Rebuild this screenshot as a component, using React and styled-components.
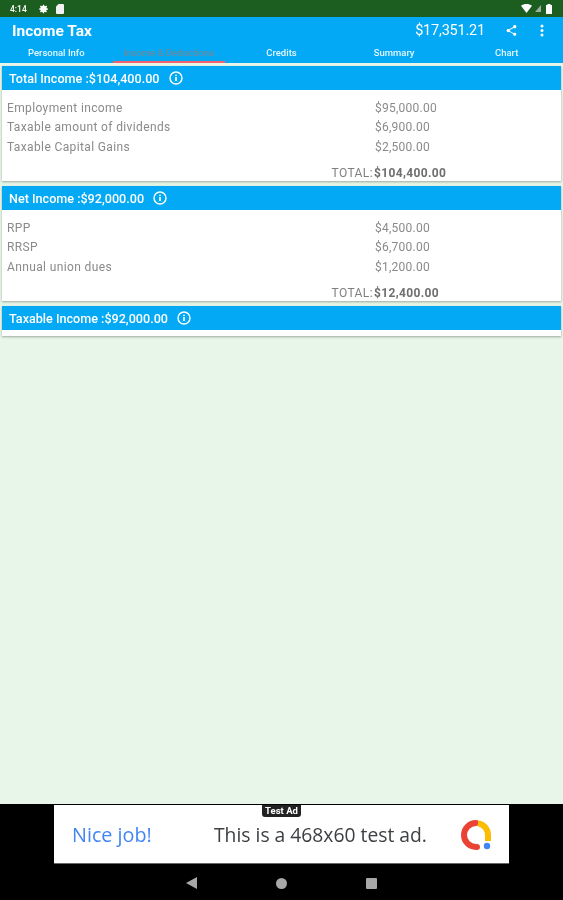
import styled, { createGlobalStyle } from 'styled-components';

const GlobalStyle = createGlobalStyle`
  html, body { margin: 0; padding: 0; height: 100%; }
  body { font-family: Roboto, "Liberation Sans", sans-serif; background: #000; }
  #root { height: 100%; }
`;

const Screen = styled.div`
  width: 563px;
  height: 900px;
  display: flex;
  flex-direction: column;
  overflow: hidden;
  background: #e8f5e9;
  filter: blur(0.55px);
`;

const StatusBar = styled.div`
  height: 17px;
  flex: none;
  background: #1b5e20;
  display: flex;
  align-items: center;
  padding: 0 11px 0 10px;
  color: #fff;
`;
const StatusTime = styled.span`
  font-size: 8.5px;
  font-weight: 500;
  width: 23px;
  margin-right: 6px;
`;
const StatusRight = styled.div`
  margin-left: auto;
  display: flex;
  align-items: center;
  gap: 2px;
`;
const StatusIcon = styled.svg`
  display: block;
  margin-right: ${(p) => p.$mr || 0}px;
`;

const AppBar = styled.div`
  height: 46px;
  flex: none;
  background: #03a9f4;
  display: flex;
  flex-direction: column;
`;
const Toolbar = styled.div`
  height: 27px;
  display: flex;
  align-items: center;
  padding: 0 19px 0 12px;
  color: #fff;
`;
const AppTitle = styled.div`
  font-size: 15.5px;
  font-weight: 700;
`;
const Refund = styled.div`
  margin-left: auto;
  margin-right: 20px;
  font-size: 14.5px;
  letter-spacing: -0.2px;
`;
const Tabs = styled.div`
  height: 19px;
  display: grid;
  grid-template-columns: repeat(5, 1fr);
`;
const Tab = styled.div`
  display: flex;
  align-items: center;
  justify-content: center;
  font-size: 9.5px;
  font-weight: 500;
  box-sizing: border-box;
  color: ${(p) => (p.$active ? '#6b8a9e' : '#e3f6ff')};
  border-bottom: 2px solid ${(p) => (p.$active ? '#f0626e' : 'transparent')};
`;

const Content = styled.div`
  flex: 1;
  display: flex;
  flex-direction: column;
  gap: 5px;
  padding: 3px 2px 0;
`;
const Card = styled.div`
  background: #fff;
  box-shadow: 0 1px 2px rgba(90, 110, 95, 0.55);
  padding-bottom: ${(p) => (p.$empty ? 6 : 0)}px;
`;
const CardHeader = styled.div`
  height: 24px;
  background: #03a9f4;
  color: #fff;
  display: flex;
  align-items: center;
  gap: 8px;
  padding-left: 7px;
  font-size: 12.6px;
  font-weight: 500;
`;
const Rows = styled.div`
  padding: 8px 0 0 5px;
  height: 91px;
  box-sizing: border-box;
  color: #8a8a8a;
  font-size: 12px;
  letter-spacing: 0.25px;
`;
const Row = styled.div`
  height: 19.5px;
  display: flex;
  align-items: center;
`;
const RowLabel = styled.div`
  width: 368px;
  letter-spacing: 0.37px;
`;
const TotalRow = styled.div`
  margin-top: 8px;
  height: 17px;
  display: flex;
  align-items: center;
`;
const TotalLabel = styled.div`
  width: 366px;
  text-align: right;
  color: #808080;
  letter-spacing: 0.4px;
`;
const TotalValue = styled.div`
  margin-left: 1px;
  font-weight: 700;
  color: #6f6f6f;
  letter-spacing: 0.35px;
`;

const BottomArea = styled.div`
  height: 96px;
  flex: none;
  background: #000;
  display: flex;
  flex-direction: column;
  align-items: center;
`;
const AdBanner = styled.div`
  position: relative;
  margin-top: 1px;
  width: 455px;
  height: 59px;
  flex: none;
  background: #fff;
  display: flex;
  align-items: center;
  padding: 0 18px;
  box-sizing: border-box;
  border-bottom: 1px solid #666;
`;
const AdBadge = styled.div`
  position: absolute;
  top: 0;
  left: 208px;
  width: 39px;
  height: 12px;
  background: #222;
  color: #fff;
  border-radius: 0 0 3px 3px;
  font-size: 9.5px;
  font-weight: 700;
  line-height: 12px;
  text-align: center;
`;
const AdNice = styled.div`
  color: #4285f4;
  font-size: 19.8px;
  width: 142px;
  font-family: "Open Sans", Roboto, sans-serif;
`;
const AdText = styled.div`
  color: #3c4043;
  font-size: 19.3px;
  font-family: "Open Sans", Roboto, sans-serif;
  white-space: nowrap;
`;
const AdLogo = styled.svg`
  position: absolute;
  left: 407px;
  top: 15px;
`;
const NavBar = styled.div`
  flex: 1;
  width: 100%;
  display: flex;
  align-items: center;
  justify-content: center;
  gap: 79px;
  padding-top: 2px;
  box-sizing: border-box;
`;

const InfoIcon = () => (
  <svg width="16" height="16" viewBox="0 0 16 16" fill="none">
    <circle cx="8" cy="8" r="6" stroke="#fff" strokeWidth="1.4" />
    <rect x="7.2" y="7" width="1.6" height="4" fill="#fff" />
    <rect x="7.2" y="4.7" width="1.6" height="1.5" fill="#fff" />
  </svg>
);

const sections = [
  {
    title: 'Total Income :$104,400.00',
    rows: [
      ['Employment income', '$95,000.00'],
      ['Taxable amount of dividends', '$6,900.00'],
      ['Taxable Capital Gains', '$2,500.00'],
    ],
    total: '$104,400.00',
  },
  {
    title: 'Net Income :$92,000.00',
    rows: [
      ['RPP', '$4,500.00'],
      ['RRSP', '$6,700.00'],
      ['Annual union dues', '$1,200.00'],
    ],
    total: '$12,400.00',
  },
  { title: 'Taxable Income :$92,000.00' },
];

const tabs = ['Personal Info', 'Income & Deductions', 'Credits', 'Summary', 'Chart'];

export default function App() {
  return (
    <Screen>
      <GlobalStyle />
      <StatusBar>
        <StatusTime>4:14</StatusTime>
        <StatusIcon $mr={7} width="10" height="10" viewBox="0 0 24 24" fill="#fff">
          <path d="M12 8a4 4 0 1 0 0 8 4 4 0 0 0 0-8zm9.4 5.500v-3l-2.700-.5-.8-1.900 1.600-2.300-2.100-2.100-2.300 1.600-1.900-.8L12.200 1.800h-3l-.5 2.700-1.900.8L4.500 3.700 2.400 5.800 4 8.100l-.8 1.900-2.700.5v3l2.700.5.8 1.900-1.600 2.300 2.100 2.100 2.300-1.600 1.900.8.5 2.700h3l.5-2.700 1.900-.8 2.300 1.600 2.100-2.100-1.600-2.300.8-1.900z" />
        </StatusIcon>
        <StatusIcon width="8" height="10" viewBox="0 0 8 10" fill="#f2f2f2">
          <path d="M2.500 0H7a1 1 0 0 1 1 1v8a1 1 0 0 1-1 1H1a1 1 0 0 1-1-1V2.500z" />
        </StatusIcon>
        <StatusRight>
          <StatusIcon $mr={1} width="11" height="9" viewBox="0 0 11 9" fill="#fff">
            <path d="M0 1.800C3 -.6 8 -.6 11 1.800L5.500 9z" />
          </StatusIcon>
          <StatusIcon $mr={3} width="6" height="7" viewBox="0 0 7 8" fill="#9db09d">
            <path d="M7 0v8H0z" />
          </StatusIcon>
          <StatusIcon width="6" height="10" viewBox="0 0 6 10" fill="#fff">
            <path d="M1.500 0h3v1H6v9H0V1h1.500z" />
          </StatusIcon>
        </StatusRight>
      </StatusBar>

      <AppBar>
        <Toolbar>
          <AppTitle>Income Tax</AppTitle>
          <Refund>$17,351.21</Refund>
          <svg width="13" height="13" viewBox="0 0 24 24" fill="#fff" style={{ marginRight: 22 }}>
            <path d="M18 16.100c-.8 0-1.500.3-2 .8L8.900 12.700c.1-.2.100-.5.100-.7s0-.5-.1-.7L16 7.200c.5.500 1.200.8 2 .8 1.700 0 3-1.300 3-3s-1.300-3-3-3-3 1.300-3 3c0 .2 0 .5.100.7L8 9.800C7.500 9.300 6.800 9 6 9c-1.700 0-3 1.300-3 3s1.300 3 3 3c.8 0 1.500-.3 2-.8l7.100 4.200c-.1.200-.1.400-.1.600 0 1.600 1.300 2.900 3 2.900s3-1.300 3-2.900-1.300-2.900-3-2.900z" />
          </svg>
          <svg width="4" height="13" viewBox="0 0 4 13" fill="#fff">
            <circle cx="2" cy="2" r="1.500" />
            <circle cx="2" cy="6.500" r="1.500" />
            <circle cx="2" cy="11" r="1.500" />
          </svg>
        </Toolbar>
        <Tabs>
          {tabs.map((t, i) => (
            <Tab key={t} $active={i === 1}>{t}</Tab>
          ))}
        </Tabs>
      </AppBar>

      <Content>
        {sections.map((s) => (
          <Card key={s.title} $empty={!s.rows}>
            <CardHeader>
              {s.title}
              <InfoIcon />
            </CardHeader>
            {s.rows && (
              <Rows>
                {s.rows.map(([label, value]) => (
                  <Row key={label}>
                    <RowLabel>{label}</RowLabel>
                    <div>{value}</div>
                  </Row>
                ))}
                <TotalRow>
                  <TotalLabel>TOTAL:</TotalLabel>
                  <TotalValue>{s.total}</TotalValue>
                </TotalRow>
              </Rows>
            )}
          </Card>
        ))}
      </Content>

      <BottomArea>
        <AdBanner>
          <AdBadge>Test Ad</AdBadge>
          <AdNice>Nice job!</AdNice>
          <AdText>This is a 468x60 test ad.</AdText>
          <AdLogo width="30" height="30" viewBox="0 0 30 30" fill="none">
            <path d="M15 3A12 12 0 0 0 15 27h1" stroke="#ea4335" strokeWidth="6" strokeLinecap="round" />
            <path d="M17 3.200A12 12 0 0 1 27 15V21" stroke="#fbbc04" strokeWidth="6" />
            <circle cx="26" cy="26" r="3.200" fill="#4285f4" />
          </AdLogo>
        </AdBanner>
        <NavBar>
          <svg width="11" height="12" viewBox="0 0 11 12" fill="#a8a8a8"><path d="M11 0v12L0 6z" /></svg>
          <svg width="11" height="11" viewBox="0 0 11 11" fill="#a8a8a8"><circle cx="5.500" cy="5.500" r="5.500" /></svg>
          <svg width="11" height="11" viewBox="0 0 11 11" fill="#a8a8a8"><rect width="11" height="11" rx="1" /></svg>
        </NavBar>
      </BottomArea>
    </Screen>
  );
}
